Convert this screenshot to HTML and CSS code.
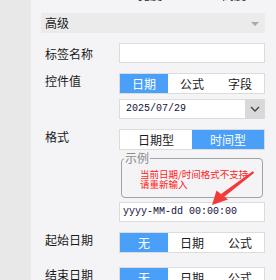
FILE: index.html
```html
<!DOCTYPE html>
<html lang="zh">
<head>
<meta charset="utf-8">
<link rel="stylesheet" href="styles.css">
</head>
<body>
<div class="page">
  <div class="side"></div>
  <div class="main">
    <div class="top"><div class="top-text"><span>宽度</span><span>高度</span></div></div>
    <div class="section-head"><span>高级</span><span class="tri"></span></div>

    <div class="row row-center">
      <div class="label">标签名称</div>
      <div class="ctrl"><div class="input"></div></div>
    </div>

    <div class="row">
      <div class="label">控件值</div>
      <div class="ctrl">
        <div class="seg"><span class="on">日期</span><span>公式</span><span>字段</span></div>
        <div class="select">
          <span class="mono sel-text">2025/07/29</span>
          <span class="sel-btn"><svg width="10" height="6" viewBox="0 0 10 6"><path d="M1 1 L5 5 L9 1" fill="none" stroke="#444" stroke-width="1.4"/></svg></span>
        </div>
      </div>
    </div>

    <div class="row">
      <div class="label">格式</div>
      <div class="ctrl">
        <div class="seg"><span>日期型</span><span class="on">时间型</span></div>
        <fieldset class="example">
          <legend>示例</legend>
          <div class="note">当前日期/时间格式不支持<br>请重新输入</div>
        </fieldset>
        <div class="input fmt mono">yyyy-MM-dd 00:00:00</div>
      </div>
    </div>

    <div class="row">
      <div class="label">起始日期</div>
      <div class="ctrl">
        <div class="seg"><span class="on">无</span><span>日期</span><span>公式</span></div>
      </div>
    </div>

    <div class="row row-last">
      <div class="label">结束日期</div>
      <div class="ctrl">
        <div class="seg"><span class="on">无</span><span>日期</span><span>公式</span></div>
      </div>
    </div>
  </div>

  <svg class="red-arrow" width="60" height="50" viewBox="205 165 60 50">
    <polygon points="253,171 254,173 224,197 221,194" fill="#f23a3a"/>
    <polygon points="212,205 216.5,190.5 228,199.5" fill="#f23a3a"/>
  </svg>
</div>
</body>
</html>
```
FILE: styles.css
```css
html, body {
  margin: 0;
  padding: 0;
}
body {
  font-family: "Noto Sans CJK SC", "Noto Sans", sans-serif;
  font-size: 12px;
  color: #1a1a1a;
  background: #f4f4f6;
}
.page {
  position: relative;
  display: flex;
  width: 276px;
  height: 280px;
  overflow: hidden;
}
.side {
  width: 31px;
  flex: none;
  background: #e8e8e8;
}
.main {
  flex: 1;
  background: #f4f4f6;
  padding: 0 11px 0 10px;
}
.top {
  height: 13px;
  overflow: hidden;
}
.top-text {
  margin-top: -13px;
  line-height: 15px;
  padding-left: 97px;
  display: flex;
  gap: 60px;
}
.section-head {
  height: 20px;
  line-height: 20px;
  background: #ebebeb;
  padding: 0 6px 0 4px;
  display: flex;
  justify-content: space-between;
  align-items: center;
}
.tri {
  width: 0;
  height: 0;
  border-left: 4px solid transparent;
  border-right: 4px solid transparent;
  border-top: 4px solid #a8a8a8;
  margin-top: 2px;
}
.row {
  display: flex;
  margin-top: 10px;
}
.row-last {
  margin-top: 14px;
}
.row-center {
  align-items: center;
}
.label {
  width: 74px;
  padding-left: 4px;
  flex: none;
  line-height: 15px;
}
.ctrl {
  width: 146px;
  flex: none;
  display: flex;
  flex-direction: column;
}
.input {
  box-sizing: border-box;
  height: 20px;
  background: #fff;
  border: 1px solid #dcdcdc;
}
.seg {
  box-sizing: border-box;
  height: 21px;
  display: flex;
  border: 1px solid #dcdcdc;
  background: #fff;
}
.seg span {
  flex: 1;
  text-align: center;
  line-height: 19px;
  color: #1a1a1a;
}
.seg span.on {
  background: #4a9ff9;
  color: #fff;
}
.mono {
  font-family: "Liberation Mono", "DejaVu Sans Mono", monospace;
  font-size: 10px;
  color: #10103a;
}
.select {
  box-sizing: border-box;
  margin-top: 5px;
  height: 20px;
  display: flex;
  align-items: stretch;
  background: #fff;
  border: 1px solid #dcdcdc;
  border-right: none;
}
.sel-text {
  flex: 1;
  padding-left: 6px;
  line-height: 18px;
}
.sel-btn {
  width: 20px;
  margin-top: -1px;
  margin-bottom: -1px;
  background: #d9d9d9;
  display: flex;
  align-items: center;
  justify-content: center;
}
.example {
  margin: 1px 2px 0 2px;
  padding: 0 0 0 2px;
  border: 1px solid #a2a2a2;
  border-radius: 4px;
  min-width: 0;
}
.example legend {
  padding: 0 1px;
  font-size: 12px;
  line-height: 14px;
  color: #8a8a8a;
}
.note {
  box-sizing: border-box;
  height: 32px;
  padding: 4px 0 0 16px;
  font-size: 9.5px;
  line-height: 10px;
  color: #ff1a1a;
}
.fmt {
  margin-top: 4px;
  padding-left: 3px;
  line-height: 18px;
}
.red-arrow {
  position: absolute;
  left: 205px;
  top: 165px;
}
```
